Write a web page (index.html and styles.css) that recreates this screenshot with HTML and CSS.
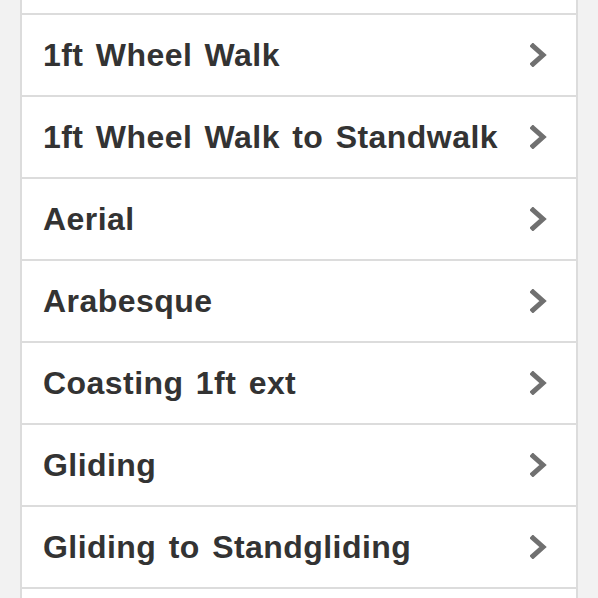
FILE: index.html
```html
<!DOCTYPE html>
<html>
<head>
<meta charset="utf-8">
<link rel="stylesheet" href="styles.css">
</head>
<body>
<ul class="list">
  <li class="item partial"></li>
  <li class="item"><span class="label">1ft Wheel Walk</span><svg class="chev" viewBox="0 0 18 24"><polyline points="3,3 13,12 3,21"/></svg></li>
  <li class="item"><span class="label">1ft Wheel Walk to Standwalk</span><svg class="chev" viewBox="0 0 18 24"><polyline points="3,3 13,12 3,21"/></svg></li>
  <li class="item"><span class="label">Aerial</span><svg class="chev" viewBox="0 0 18 24"><polyline points="3,3 13,12 3,21"/></svg></li>
  <li class="item"><span class="label">Arabesque</span><svg class="chev" viewBox="0 0 18 24"><polyline points="3,3 13,12 3,21"/></svg></li>
  <li class="item"><span class="label">Coasting 1ft ext</span><svg class="chev" viewBox="0 0 18 24"><polyline points="3,3 13,12 3,21"/></svg></li>
  <li class="item"><span class="label">Gliding</span><svg class="chev" viewBox="0 0 18 24"><polyline points="3,3 13,12 3,21"/></svg></li>
  <li class="item"><span class="label">Gliding to Standgliding</span><svg class="chev" viewBox="0 0 18 24"><polyline points="3,3 13,12 3,21"/></svg></li>
  <li class="item partial"></li>
</ul>
</body>
</html>
```
FILE: styles.css
```css
html, body {
  margin: 0;
  padding: 0;
  background: #f2f2f2;
  height: 598px;
  overflow: hidden;
}
.list {
  list-style: none;
  margin: 0 20px;
  padding: 0;
  background: #fff;
  border-left: 2px solid #dcdcdc;
  border-right: 2px solid #dcdcdc;
}
.item {
  display: flex;
  align-items: center;
  justify-content: space-between;
  height: 80px;
  padding: 0 28px 0 21px;
  border-bottom: 2px solid #dcdcdc;
}
.item.partial {
  height: 13px;
}
.item.partial:last-child {
  height: 20px;
  border-bottom: 0;
}
.label {
  font-family: "Liberation Sans", Arial, sans-serif;
  font-weight: bold;
  font-size: 32px;
  letter-spacing: 0.45px;
  word-spacing: 3px;
  color: #333;
}
.chev {
  width: 18px;
  height: 24px;
  flex: none;
}
.chev polyline {
  fill: none;
  stroke: #707070;
  stroke-width: 5;
  stroke-linecap: square;
  stroke-linejoin: miter;
}
```
